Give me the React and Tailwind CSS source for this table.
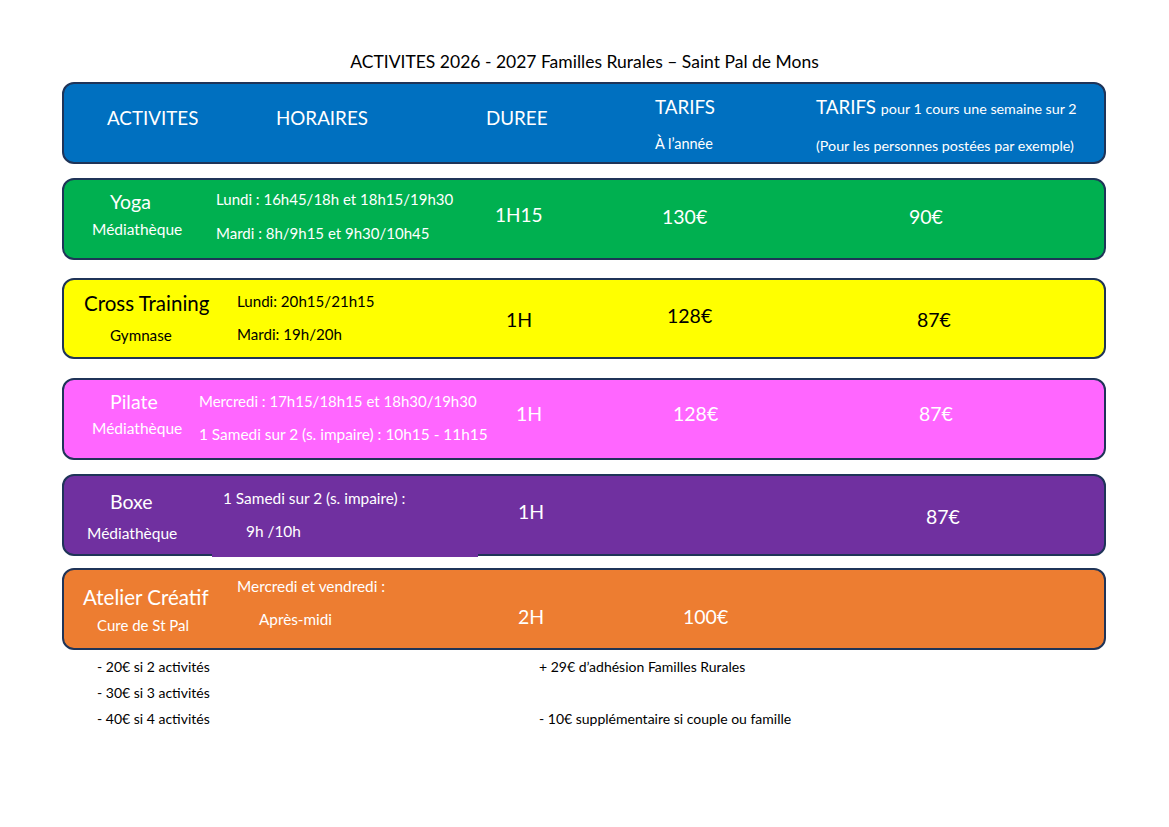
import React from "react";

export default function App() {
  return (
    <div className="w-[1169px] h-[827px] bg-white text-black font-['Lato',sans-serif] overflow-hidden">
      <div className="pt-[50px] text-center text-[17.5px] leading-[24px]">
        ACTIVITES 2026 - 2027 Familles Rurales – Saint Pal de Mons
      </div>

      {/* Header */}
      <div className="mt-[8px] ml-[62px] w-[1044px] h-[82px] rounded-[12px] border-2 border-[#1f3458] bg-[#0070c0] text-white flex">
        <div className="w-[212px] pl-[43px] pt-[22px] text-[18.8px] leading-[24px]">ACTIVITES</div>
        <div className="w-[210px] pt-[22px] text-[18.8px] leading-[24px]">HORAIRES</div>
        <div className="w-[169px] pt-[22px] text-[18.8px] leading-[24px]">DUREE</div>
        <div className="w-[161px] pt-[11px] flex flex-col">
          <div className="text-[18.8px] leading-[24px]">TARIFS</div>
          <div className="mt-[16px] text-[14.5px] leading-[18px]">À l’année</div>
        </div>
        <div className="flex-1 pt-[11px] flex flex-col">
          <div className="text-[18.8px] leading-[24px]">
            TARIFS <span className="text-[14.3px]">pour 1 cours une semaine sur 2</span>
          </div>
          <div className="mt-[16px] text-[14.3px] leading-[18px]">(Pour les personnes postées par exemple)</div>
        </div>
      </div>

      {/* Yoga */}
      <div className="mt-[14px] ml-[62px] w-[1044px] h-[82px] rounded-[12px] border-2 border-[#1f3458] bg-[#00b050] text-white flex">
        <div className="w-[152px] pt-[10px] flex flex-col">
          <div className="pl-[46px] text-[19.5px] leading-[24px]">Yoga</div>
          <div className="pl-[28px] mt-[6px] text-[15.5px] leading-[18px]">Médiathèque</div>
        </div>
        <div className="w-[279px] pt-[10px] flex flex-col">
          <div className="text-[15px] leading-[18px]">Lundi : 16h45/18h et 18h15/19h30</div>
          <div className="mt-[16px] text-[15px] leading-[18px]">Mardi : 8h/9h15 et 9h30/10h45</div>
        </div>
        <div className="w-[167px] pt-[23px] text-[19px] leading-[24px]">1H15</div>
        <div className="w-[247px] pt-[25px] text-[19.5px] leading-[24px]">130€</div>
        <div className="flex-1 pt-[25px] text-[19.5px] leading-[24px]">90€</div>
      </div>

      {/* Cross Training */}
      <div className="mt-[18px] ml-[62px] w-[1044px] h-[81px] rounded-[12px] border-2 border-[#1f3458] bg-[#ffff00] text-black flex">
        <div className="w-[173px] pt-[11px] flex flex-col">
          <div className="pl-[20px] text-[20.5px] leading-[24px]">Cross Training</div>
          <div className="pl-[46px] mt-[11px] text-[15.2px] leading-[18px]">Gymnase</div>
        </div>
        <div className="w-[269px] pt-[12px] flex flex-col">
          <div className="text-[15.1px] leading-[18px]">Lundi: 20h15/21h15</div>
          <div className="mt-[15px] text-[15.1px] leading-[18px]">Mardi: 19h/20h</div>
        </div>
        <div className="w-[161px] pt-[28px] text-[19.5px] leading-[24px]">1H</div>
        <div className="w-[250px] pt-[24px] text-[19.5px] leading-[24px]">128€</div>
        <div className="flex-1 pt-[28px] text-[19.5px] leading-[24px]">87€</div>
      </div>

      {/* Pilate */}
      <div className="mt-[19px] ml-[62px] w-[1044px] h-[82px] rounded-[12px] border-2 border-[#1f3458] bg-[#ff66ff] text-white flex">
        <div className="w-[135px] pt-[10px] flex flex-col">
          <div className="pl-[46px] text-[19.5px] leading-[24px]">Pilate</div>
          <div className="pl-[28px] mt-[5px] text-[15.5px] leading-[18px]">Médiathèque</div>
        </div>
        <div className="w-[317px] pt-[12px] flex flex-col">
          <div className="text-[15px] leading-[18px]">Mercredi : 17h15/18h15 et 18h30/19h30</div>
          <div className="mt-[15px] text-[15.4px] leading-[18px]">1 Samedi sur 2 (s. impaire) : 10h15 - 11h15</div>
        </div>
        <div className="w-[157px] pt-[22px] text-[19.5px] leading-[24px]">1H</div>
        <div className="w-[246px] pt-[22px] text-[19.5px] leading-[24px]">128€</div>
        <div className="flex-1 pt-[22px] text-[19.5px] leading-[24px]">87€</div>
      </div>

      {/* Boxe */}
      <div className="relative mt-[14px] ml-[62px] w-[1044px] h-[82px] rounded-[12px] border-2 border-[#1f3458] bg-[#7030a0] text-white flex">
        <div className="w-[159px] pt-[14px] flex flex-col">
          <div className="pl-[46px] text-[19.5px] leading-[24px]">Boxe</div>
          <div className="pl-[23px] mt-[10px] text-[15.5px] leading-[18px]">Médiathèque</div>
        </div>
        <div className="w-[295px] pt-[13px] flex flex-col">
          <div className="text-[15.4px] leading-[18px]">1 Samedi sur 2 (s. impaire) :</div>
          <div className="pl-[23px] mt-[15px] text-[15.4px] leading-[18px]">9h /10h</div>
        </div>
        <div className="w-[408px] pt-[24px] text-[19.5px] leading-[24px]">1H</div>
        <div className="flex-1 pt-[29px] text-[19.5px] leading-[24px]">87€</div>
        <div className="absolute left-[148px] w-[266px] bottom-[-3px] h-[4px] bg-[#7030a0]" />
      </div>

      {/* Atelier Créatif */}
      <div className="mt-[12px] ml-[62px] w-[1044px] h-[82px] rounded-[12px] border-2 border-[#1f3458] bg-[#ed7d31] text-white flex">
        <div className="w-[173px] pt-[15px] flex flex-col">
          <div className="pl-[19px] text-[20.5px] leading-[24px]">Atelier Créatif</div>
          <div className="pl-[33px] mt-[7px] text-[15px] leading-[18px]">Cure de St Pal</div>
        </div>
        <div className="w-[281px] pt-[7px] flex flex-col">
          <div className="text-[15.4px] leading-[18px]">Mercredi et vendredi :</div>
          <div className="pl-[22px] mt-[15px] text-[15.3px] leading-[18px]">Après-midi</div>
        </div>
        <div className="w-[165px] pt-[35px] text-[19.5px] leading-[24px]">2H</div>
        <div className="flex-1 pt-[35px] text-[19.5px] leading-[24px]">100€</div>
      </div>

      {/* Footer */}
      <div className="mt-[4px] flex text-[14px] leading-[26px]">
        <div className="w-[539px] pl-[97px] flex flex-col">
          <div>- 20€ si 2 activités</div>
          <div>- 30€ si 3 activités</div>
          <div>- 40€ si 4 activités</div>
        </div>
        <div className="flex-1 flex flex-col">
          <div>+ 29€ d’adhésion Familles Rurales</div>
          <div>&nbsp;</div>
          <div>- 10€ supplémentaire si couple ou famille</div>
        </div>
      </div>
    </div>
  );
}
